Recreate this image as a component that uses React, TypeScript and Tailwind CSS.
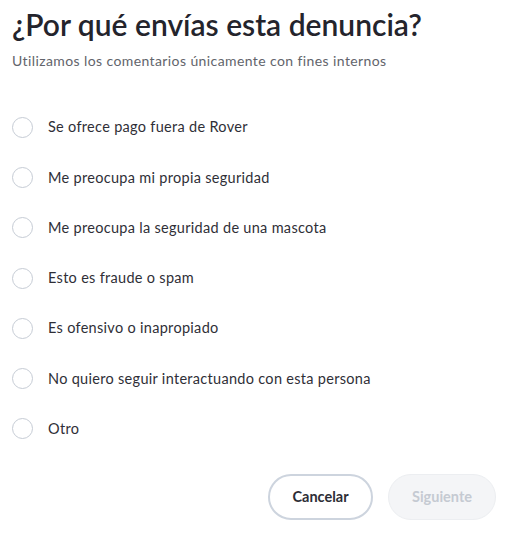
import React from "react";

const options = [
  "Se ofrece pago fuera de Rover",
  "Me preocupa mi propia seguridad",
  "Me preocupa la seguridad de una mascota",
  "Esto es fraude o spam",
  "Es ofensivo o inapropiado",
  "No quiero seguir interactuando con esta persona",
  "Otro",
];

export default function App() {
  return (
    <div
      className="w-[507px] h-[536px] bg-white px-[12px] pt-[5px] text-[#2d2d35]"
      style={{ fontFamily: "Lato, 'Noto Sans', sans-serif" }}
    >
      <h1 className="text-[30px] leading-[38px] font-semibold text-[#24242c]">¿Por qué envías esta denuncia?</h1>
      <p className="mt-[8px] text-[14px] leading-[20px] tracking-[0.4px] text-[#62646b]">
        Utilizamos los comentarios únicamente con fines internos
      </p>
      <div className="mt-[31px] flex flex-col">
        {options.map((o) => (
          <label key={o} className="flex items-center h-[50.3px] gap-[15px] cursor-pointer">
            <span className="w-[21px] h-[21px] rounded-full border border-[#c6ccd5] bg-white shrink-0" />
            <span className="text-[14.5px] tracking-[0.3px] text-[#2f2f37]">{o}</span>
          </label>
        ))}
      </div>
      <div className="mt-[20px] flex justify-end gap-[15px]">
        <button className="w-[105px] h-[46px] rounded-full border-2 border-[#cdd4de] bg-white text-[14.5px] font-bold text-[#2d2d35]">
          Cancelar
        </button>
        <button className="w-[108px] h-[46px] rounded-full border border-[#eceef1] bg-[#f4f5f7] text-[14.5px] font-bold text-[#c5cad2] mr-[-1px]">
          Siguiente
        </button>
      </div>
    </div>
  );
}
